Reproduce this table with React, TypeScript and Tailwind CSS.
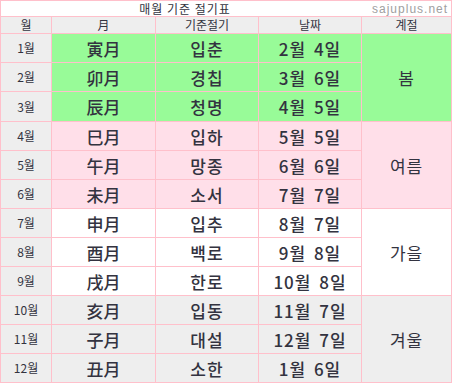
import type React from 'react';

type Row = {
  month: string;
  han: string;
  term: string;
  date: string;
};

type Season = {
  name: string;
  bg: string;
  rows: Row[];
};

const seasons: Season[] = [
  {
    name: '봄',
    bg: 'bg-[#98fb98]',
    rows: [
      { month: '1월', han: '寅月', term: '입춘', date: '2월 4일' },
      { month: '2월', han: '卯月', term: '경칩', date: '3월 6일' },
      { month: '3월', han: '辰月', term: '청명', date: '4월 5일' },
    ],
  },
  {
    name: '여름',
    bg: 'bg-[#ffdfe9]',
    rows: [
      { month: '4월', han: '巳月', term: '입하', date: '5월 5일' },
      { month: '5월', han: '午月', term: '망종', date: '6월 6일' },
      { month: '6월', han: '未月', term: '소서', date: '7월 7일' },
    ],
  },
  {
    name: '가을',
    bg: 'bg-white',
    rows: [
      { month: '7월', han: '申月', term: '입추', date: '8월 7일' },
      { month: '8월', han: '酉月', term: '백로', date: '9월 8일' },
      { month: '9월', han: '戌月', term: '한로', date: '10월 8일' },
    ],
  },
  {
    name: '겨울',
    bg: 'bg-[#eeeeee]',
    rows: [
      { month: '10월', han: '亥月', term: '입동', date: '11월 7일' },
      { month: '11월', han: '子月', term: '대설', date: '12월 7일' },
      { month: '12월', han: '丑月', term: '소한', date: '1월 6일' },
    ],
  },
];

const cell = 'border border-[#ffc0cb] p-0 text-center align-middle';

const App: React.FC = () => {
  return (
    <div className="bg-white w-[453px] h-[383px] font-['Noto_Sans_CJK_KR',sans-serif] text-[#333340]">
      <table className="table-fixed border-collapse w-[451px]">
        <colgroup>
          <col className="w-[51px]" />
          <col className="w-[104px]" />
          <col className="w-[103px]" />
          <col className="w-[103px]" />
          <col className="w-[90px]" />
        </colgroup>
        <tbody>
          {/*title*/}
          <tr className="h-[16px]">
            <td colSpan={5} className={`${cell} bg-white`}>
              <div className="flex items-center h-[15px] leading-none">
                <span className="flex-1 text-center text-[12px] tracking-[1px]">
                  매월 기준 절기표
                </span>
                <span className="w-[82px] text-[12px] tracking-[1px] text-[#a0a0a0] font-['Liberation_Sans',sans-serif]">
                  sajuplus.net
                </span>
              </div>
            </td>
          </tr>
          {/*header*/}
          <tr className="h-[17px] bg-[#eeeeee] text-[12px] leading-none">
            <td className={cell}>월</td>
            <td className={cell}>月</td>
            <td className={cell}>기준절기</td>
            <td className={cell}>날짜</td>
            <td className={cell}>계절</td>
          </tr>
          {seasons.map(season =>
            season.rows.map((row, i) => (
              <tr key={row.month} className={i === 2 && season.name === '봄' ? 'h-[30px]' : 'h-[29px]'}>
                <td className={`${cell} bg-[#eeeeee] text-[12px] leading-none`}>{row.month}</td>
                <td className={`${cell} ${season.bg} text-[17px] font-medium leading-none`}>{row.han}</td>
                <td className={`${cell} ${season.bg} text-[17px] font-medium leading-none tracking-[1px]`}>{row.term}</td>
                <td className={`${cell} ${season.bg} text-[17px] font-medium leading-none tracking-[1px] [word-spacing:3px]`}>{row.date}</td>
                {i === 0 && (
                  <td rowSpan={3} className={`${cell} ${season.bg} text-[17px] leading-none tracking-[1px]`}>
                    {season.name}
                  </td>
                )}
              </tr>
            ))
          )}
        </tbody>
      </table>
    </div>
  );
};

export default App;
